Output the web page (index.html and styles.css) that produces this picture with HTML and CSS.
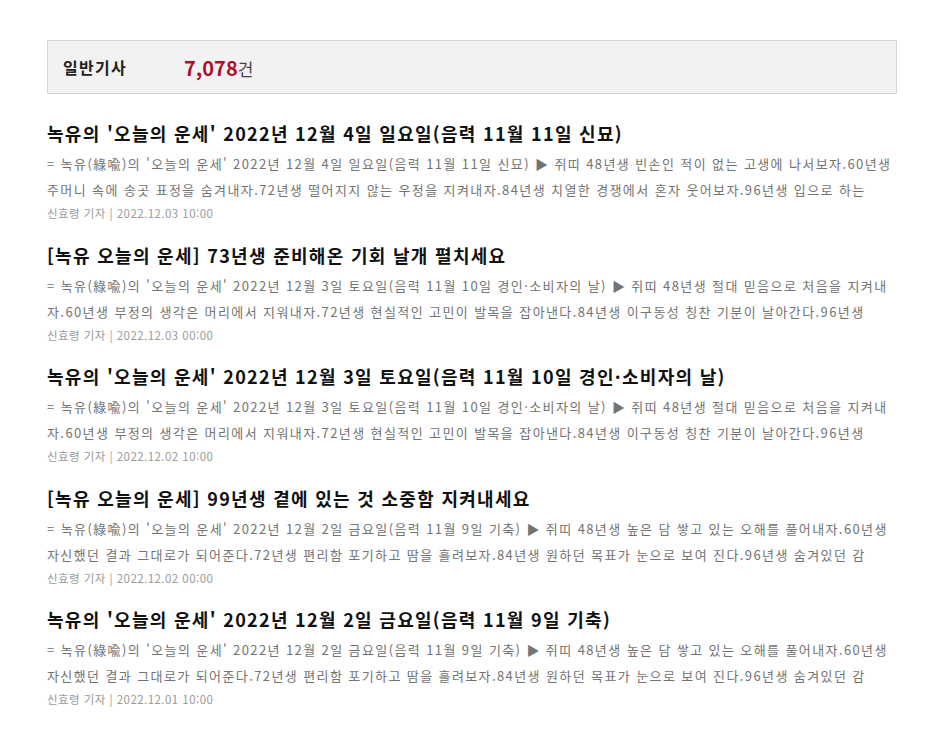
FILE: index.html
```html
<!DOCTYPE html>
<html lang="ko">
<head>
<meta charset="utf-8">
<link rel="stylesheet" href="styles.css">
</head>
<body>
<div class="wrap">
  <div class="head">
    <span class="head-label">일반기사</span>
    <span class="head-count"><b>7,078</b>건</span>
  </div>
  <div class="list">
    <div class="item">
      <div class="title">녹유의 '오늘의 운세' 2022년 12월 4일 일요일(음력 11월 11일 신묘)</div>
      <div class="sum">= 녹유(綠喩)의 '오늘의 운세' 2022년 12월 4일 일요일(음력 11월 11일 신묘) ▶ 쥐띠 48년생 빈손인 적이 없는 고생에 나서보자.60년생</div>
      <div class="sum">주머니 속에 송곳 표정을 숨겨내자.72년생 떨어지지 않는 우정을 지켜내자.84년생 치열한 경쟁에서 혼자 웃어보자.96년생 입으로 하는</div>
      <div class="by">신효령 기자 | 2022.12.03 10:00</div>
    </div>
    <div class="item">
      <div class="title">[녹유 오늘의 운세] 73년생 준비해온 기회 날개 펼치세요</div>
      <div class="sum">= 녹유(綠喩)의 '오늘의 운세' 2022년 12월 3일 토요일(음력 11월 10일 경인·소비자의 날) ▶ 쥐띠 48년생 절대 믿음으로 처음을 지켜내</div>
      <div class="sum">자.60년생 부정의 생각은 머리에서 지워내자.72년생 현실적인 고민이 발목을 잡아낸다.84년생 이구동성 칭찬 기분이 날아간다.96년생</div>
      <div class="by">신효령 기자 | 2022.12.03 00:00</div>
    </div>
    <div class="item">
      <div class="title">녹유의 '오늘의 운세' 2022년 12월 3일 토요일(음력 11월 10일 경인·소비자의 날)</div>
      <div class="sum">= 녹유(綠喩)의 '오늘의 운세' 2022년 12월 3일 토요일(음력 11월 10일 경인·소비자의 날) ▶ 쥐띠 48년생 절대 믿음으로 처음을 지켜내</div>
      <div class="sum">자.60년생 부정의 생각은 머리에서 지워내자.72년생 현실적인 고민이 발목을 잡아낸다.84년생 이구동성 칭찬 기분이 날아간다.96년생</div>
      <div class="by">신효령 기자 | 2022.12.02 10:00</div>
    </div>
    <div class="item">
      <div class="title">[녹유 오늘의 운세] 99년생 곁에 있는 것 소중함 지켜내세요</div>
      <div class="sum">= 녹유(綠喩)의 '오늘의 운세' 2022년 12월 2일 금요일(음력 11월 9일 기축) ▶ 쥐띠 48년생 높은 담 쌓고 있는 오해를 풀어내자.60년생</div>
      <div class="sum">자신했던 결과 그대로가 되어준다.72년생 편리함 포기하고 땀을 흘려보자.84년생 원하던 목표가 눈으로 보여 진다.96년생 숨겨있던 감</div>
      <div class="by">신효령 기자 | 2022.12.02 00:00</div>
    </div>
    <div class="item">
      <div class="title">녹유의 '오늘의 운세' 2022년 12월 2일 금요일(음력 11월 9일 기축)</div>
      <div class="sum">= 녹유(綠喩)의 '오늘의 운세' 2022년 12월 2일 금요일(음력 11월 9일 기축) ▶ 쥐띠 48년생 높은 담 쌓고 있는 오해를 풀어내자.60년생</div>
      <div class="sum">자신했던 결과 그대로가 되어준다.72년생 편리함 포기하고 땀을 흘려보자.84년생 원하던 목표가 눈으로 보여 진다.96년생 숨겨있던 감</div>
      <div class="by">신효령 기자 | 2022.12.01 10:00</div>
    </div>
  </div>
</div>
</body>
</html>
```

FILE: styles.css
```css
html, body {
  margin: 0;
  padding: 0;
  background: #ffffff;
}
body {
  font-family: "Noto Sans CJK KR", "Noto Sans", sans-serif;
  color: #111;
}
.wrap {
  width: 850px;
  margin: 40px 0 0 47px;
}
.head {
  box-sizing: border-box;
  height: 54px;
  border: 1px solid #d6d6d6;
  background: #f2f2f2;
  display: flex;
  align-items: center;
  padding-left: 15px;
}
.head-label {
  font-size: 16px;
  font-weight: 700;
  color: #222;
  letter-spacing: 1.3px;
  width: 121px;
}
.head-count {
  font-size: 17px;
  color: #444;
}
.head-count b {
  font-size: 20px;
  color: #b00d2a;
  font-weight: 700;
}
.list {
  padding-top: 27px;
  display: flex;
  flex-direction: column;
  gap: 19.5px;
}
.title {
  font-size: 18px;
  font-weight: 700;
  line-height: 24px;
  color: #111;
  letter-spacing: 1.3px;
  margin-bottom: 6px;
  white-space: nowrap;
}
.sum {
  font-size: 13px;
  line-height: 26px;
  color: #737373;
  letter-spacing: 1.4px;
  white-space: nowrap;
  overflow: hidden;
}
.by {
  font-size: 11.5px;
  line-height: 20px;
  color: #999;
  letter-spacing: 0.45px;
}
```
